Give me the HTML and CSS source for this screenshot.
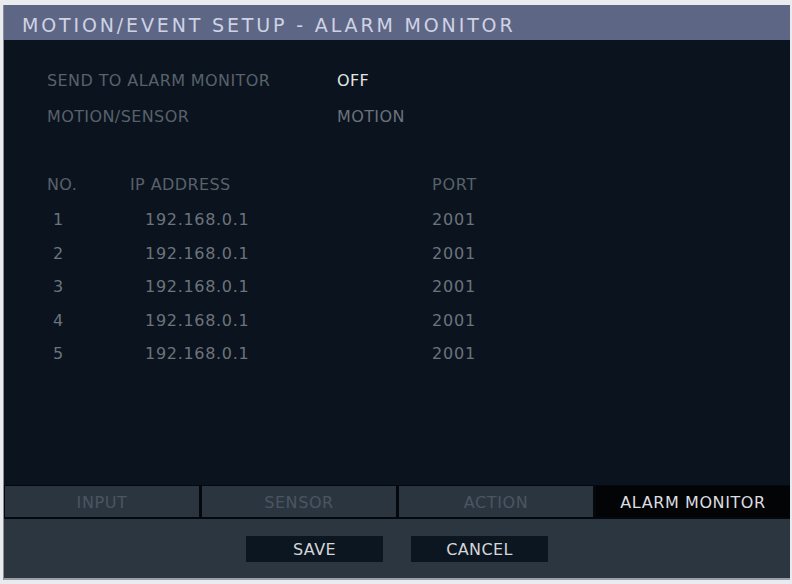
FILE: index.html
```html
<!DOCTYPE html>
<html>
<head>
<meta charset="utf-8">
<link rel="stylesheet" href="styles.css">
</head>
<body>
<div class="frame">
  <div class="title">MOTION/EVENT SETUP - ALARM MONITOR</div>
  <div class="main">
    <div class="setting">
      <span class="label">SEND TO ALARM MONITOR</span>
      <span class="value on">OFF</span>
    </div>
    <div class="setting">
      <span class="label">MOTION/SENSOR</span>
      <span class="value">MOTION</span>
    </div>
    <div class="table">
      <div class="row head">
        <span class="c-no">NO.</span><span class="c-ip">IP ADDRESS</span><span class="c-port">PORT</span>
      </div>
      <div class="row"><span class="c-no n">1</span><span class="c-ip ip">192.168.0.1</span><span class="c-port">2001</span></div>
      <div class="row"><span class="c-no n">2</span><span class="c-ip ip">192.168.0.1</span><span class="c-port">2001</span></div>
      <div class="row"><span class="c-no n">3</span><span class="c-ip ip">192.168.0.1</span><span class="c-port">2001</span></div>
      <div class="row"><span class="c-no n">4</span><span class="c-ip ip">192.168.0.1</span><span class="c-port">2001</span></div>
      <div class="row"><span class="c-no n">5</span><span class="c-ip ip">192.168.0.1</span><span class="c-port">2001</span></div>
    </div>
  </div>
  <div class="tabs">
    <div class="tab">INPUT</div>
    <div class="tab">SENSOR</div>
    <div class="tab">ACTION</div>
    <div class="tab active">ALARM MONITOR</div>
  </div>
  <div class="bottom">
    <div class="btn">SAVE</div>
    <div class="btn">CANCEL</div>
  </div>
</div>
</body>
</html>
```
FILE: styles.css
```css
html, body {
  margin: 0;
  padding: 0;
  background: #e9ebee;
}
body {
  width: 792px;
  height: 584px;
  overflow: hidden;
  font-family: "DejaVu Sans", Verdana, sans-serif;
}
.frame {
  margin: 5px 2px 0 3px;
  height: 575px;
  display: flex;
  flex-direction: column;
  background: #0a131e;
  border-left: 1px solid #8a8f96;
  box-sizing: border-box;
}
.title {
  height: 35px;
  background: #5e6686;
  color: #cfd2e4;
  font-size: 19px;
  line-height: 40px;
  padding-left: 18px;
  letter-spacing: 2.85px;
  flex: none;
  white-space: nowrap;
  overflow: hidden;
}
.main {
  flex: 1;
  background: #0a131e;
  padding: 28px 0 0 43px;
  font-size: 16px;
  letter-spacing: 0.4px;
}
.setting {
  display: flex;
  height: 36px;
  line-height: 26px;
}
.label {
  width: 290px;
  color: #59616b;
}
.value {
  color: #6c727b;
}
.value.on {
  color: #e2e4e6;
}
.table {
  margin-top: 34px;
}
.row {
  display: flex;
  height: 33.5px;
  line-height: 22px;
  color: #6c737c;
}
.row.head {
  color: #59616b;
  height: 35px;
}
.c-no {
  width: 83px;
}
.c-no.n {
  padding-left: 6px;
  width: 77px;
}
.c-ip {
  width: 302px;
}
.c-ip.ip {
  padding-left: 15px;
  width: 287px;
  letter-spacing: 0.7px;
}
.c-port {
  letter-spacing: 0.8px;
}
.tabs {
  flex: none;
  height: 34px;
  display: flex;
  gap: 3px;
  padding: 1px 0 2px 1px;
  background: #05090e;
  box-sizing: border-box;
}
.tab {
  flex: 1;
  background: #2a3540;
  color: #4a5560;
  font-size: 16px;
  letter-spacing: 0.6px;
  text-align: center;
  line-height: 33px;
}
.tab.active {
  background: #030405;
  color: #dcdee0;
}
.bottom {
  flex: none;
  height: 61px;
  background: #2c3641;
  display: flex;
  justify-content: center;
  align-items: flex-start;
  gap: 28px;
  padding-top: 17px;
  box-sizing: border-box;
  border-bottom: 2px solid #9aa0a6;
}
.btn {
  width: 137px;
  height: 26px;
  background: #0c1620;
  color: #d4d6da;
  font-size: 16px;
  letter-spacing: 0.4px;
  text-align: center;
  line-height: 28px;
}
```
